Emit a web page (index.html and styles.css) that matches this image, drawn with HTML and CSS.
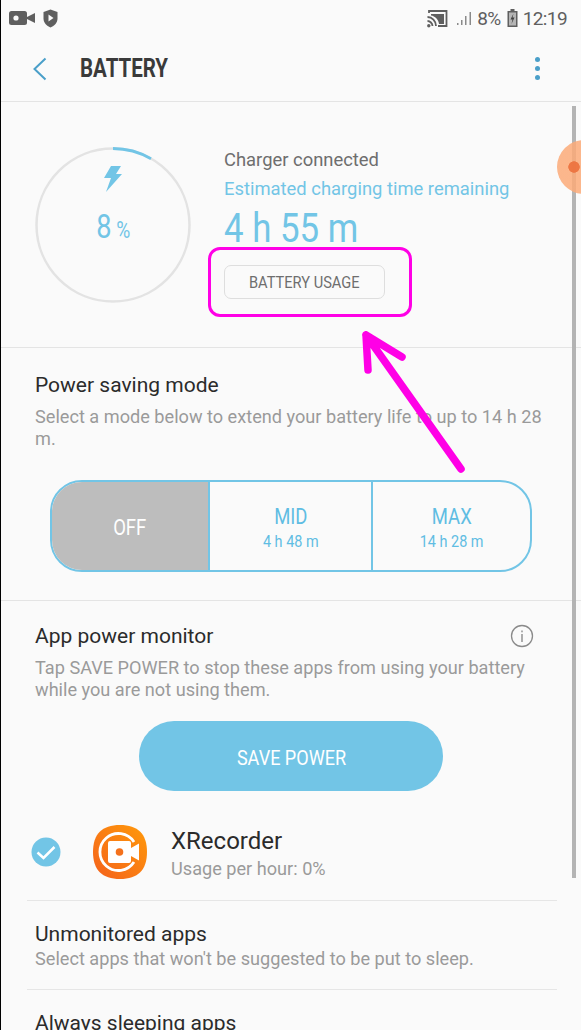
FILE: index.html
```html
<!DOCTYPE html>
<html lang="en">
  <head>
    <meta charset="UTF-8" />
    <meta name="viewport" content="width=device-width, initial-scale=1.0" />
    <title>Battery</title>
    <link rel="stylesheet" href="styles.css">
  </head>
  <body>
    <div class="phone">
      <div class="status-bar">
        <div class="status-left">
          <svg width="27" height="16" viewBox="0 0 27 16"><rect x="0" y="1" width="18" height="14" rx="2.5" fill="#5f5f5f"/><path d="M18 7l8-4v10l-8-4z" fill="#5f5f5f"/><circle cx="7" cy="8" r="2.6" fill="#fafafa"/></svg>
          <svg width="15" height="19" viewBox="0 0 15 19"><path d="M7.5 0.5L14.5 3v6.5c0 4.2-3 7.5-7 9-4-1.500-7-4.800-7-9V3z" fill="#5f5f5f"/><path d="M5.500 5.500l5 3.500-5 3.500z" fill="#fafafa"/></svg>
        </div>
        <div class="status-right">
          <svg class="cast" width="21" height="19" viewBox="0 0 21 19"><path d="M2 4V2h17.500v15H11" fill="none" stroke="#5f5f5f" stroke-width="1.800"/><path d="M0.500 8c4.500 0 8.500 4 8.500 9M0.500 12c2.500 0 5 2.300 5 5" fill="none" stroke="#5f5f5f" stroke-width="1.800"/><circle cx="1.800" cy="16.800" r="1.700" fill="#5f5f5f"/><path d="M4 5h13v10h-5c-.5-4.500-4-8-8-8.500z" fill="#5f5f5f"/></svg>
          <svg class="signal" width="15" height="15" viewBox="0 0 15 15"><rect x="0" y="12" width="1.500" height="2" fill="#8a8a8a"/><rect x="4" y="9" width="1.500" height="5" fill="#8a8a8a"/><rect x="8" y="5" width="1.500" height="9" fill="#8a8a8a"/><rect x="12.500" y="1" width="1.500" height="13" fill="#8a8a8a"/></svg>
          <span class="status-text pct">8%</span>
          <svg class="batt" width="11" height="18" viewBox="0 0 11 18"><path d="M3.500 0h4v2h3v16H.5V2h3z" fill="#5f5f5f"/><rect x="2" y="3.500" width="7" height="13" fill="#b5b5b5"/><path d="M6.500 4.500L3.500 10.500h2l-1 4.500 3-6.500h-2z" fill="#404040"/></svg>
          <span class="status-text">12:19</span>
        </div>
      </div>

      <div class="app-bar">
        <svg class="back" width="16" height="24" viewBox="0 0 16 24"><path d="M13.500 1.500L2.500 12l11 10.500" fill="none" stroke="#4a9fc9" stroke-width="2"/></svg>
        <h1 class="title">BATTERY</h1>
        <div class="more"><i></i><i></i><i></i></div>
      </div>

      <section class="summary">
        <div class="ring">
          <svg class="ring-art" width="158" height="158" viewBox="0 0 158 158">
            <circle cx="79" cy="79" r="76.500" fill="none" stroke="#e3e3e3" stroke-width="2.500"/>
            <path d="M79 2.500A76.500 76.500 0 0 1 117 12.700" fill="none" stroke="#72c5e6" stroke-width="2.800"/>
          </svg>
          <svg class="bolt" width="18" height="26" viewBox="0 0 18 26"><path d="M7 0h10l-5 8h6L2 26l5-14H0z" fill="#72c5e6"/></svg>
          <div class="ring-value">8<span class="ring-unit">%</span></div>
        </div>
        <div class="charge">
          <p class="charge-state">Charger connected</p>
          <p class="charge-label">Estimated charging time remaining</p>
          <p class="charge-time">4 h 55 m</p>
          <button class="usage-btn"><span>BATTERY USAGE</span></button>
        </div>
      </section>

      <section class="saving">
        <h2 class="row-title">Power saving mode</h2>
        <p class="row-desc">Select a mode below to extend your battery life to up to 14 h 28 m.</p>
        <div class="modes">
          <div class="mode mode-off"><strong>OFF</strong></div>
          <div class="mode mode-mid"><strong>MID</strong><span>4 h 48 m</span></div>
          <div class="mode mode-max"><strong>MAX</strong><span>14 h 28 m</span></div>
        </div>
      </section>

      <section class="monitor">
        <div class="monitor-head">
          <h2 class="row-title">App power monitor</h2>
          <svg width="24" height="24" viewBox="0 0 24 24"><circle cx="12" cy="12" r="10.500" fill="none" stroke="#8a8a8a" stroke-width="1.300"/><rect x="11.300" y="10" width="1.400" height="8" fill="#8a8a8a"/><rect x="11.300" y="6.500" width="1.400" height="1.800" fill="#8a8a8a"/></svg>
        </div>
        <p class="row-desc">Tap SAVE POWER to stop these apps from using your battery while you are not using them.</p>
        <button class="save-btn"><span>SAVE POWER</span></button>
        <div class="app-row">
          <svg class="check" width="30" height="30" viewBox="0 0 30 30"><circle cx="15" cy="15" r="14.500" fill="#72c5e6"/><path d="M6.500 15.500l6 5.500 11-11" fill="none" stroke="#fff" stroke-width="2.500"/></svg>
          <svg class="app-icon" width="54" height="54" viewBox="0 0 54 54">
            <defs><linearGradient id="xr" x1="1" y1="0" x2="0" y2="1"><stop offset="0" stop-color="#ff9a0a"/><stop offset="1" stop-color="#f4611c"/></linearGradient></defs>
            <path d="M27 0C45 0 54 9 54 27S45 54 27 54 0 45 0 27 9 0 27 0z" fill="url(#xr)"/>
            <path d="M41 17A18.500 18.500 0 1 0 41 37" fill="none" stroke="#fff" stroke-width="2.800"/>
            <path d="M17 16h19a2 2 0 0 1 2 2v5l8-4.500v17L38 31v5a2 2 0 0 1-2 2H17a2 2 0 0 1-2-2V18a2 2 0 0 1 2-2z" fill="#fff"/>
            <circle cx="26.500" cy="27" r="3.800" fill="#f4711c"/>
          </svg>
          <div class="app-text">
            <div class="app-name">XRecorder</div>
            <div class="app-usage">Usage per hour: 0%</div>
          </div>
        </div>
      </section>

      <div class="list-item">
        <h2 class="row-title">Unmonitored apps</h2>
        <p class="row-desc">Select apps that won't be suggested to be put to sleep.</p>
      </div>
      <div class="list-item">
        <h2 class="row-title">Always sleeping apps</h2>
      </div>

      <div class="scrollbar"></div>
      <div class="touch-dot"></div>
      <div class="callout"></div>
      <svg class="arrow" width="120" height="150" viewBox="0 0 120 150">
        <path d="M100 139L5 5M5 5L7 40M5 5L41 27" fill="none" stroke="#ff00e6" stroke-width="7.500" stroke-linecap="round" stroke-linejoin="round"/>
      </svg>
    </div>
  </body>
</html>
```

FILE: styles.css
```css
/* styles.css */
* {
  box-sizing: border-box;
}

html,
body {
  margin: 0;
  height: 100%;
}

body {
  font-family: Roboto, "Noto Sans", sans-serif;
  background-color: #000;
}

.phone {
  position: relative;
  width: 580px;
  height: 1030px;
  margin-left: 1px;
  overflow: hidden;
  background-color: #fafafa;
}

h1,
h2,
p {
  margin: 0;
  font-weight: normal;
}

button {
  font-family: inherit;
  cursor: pointer;
}

/* status bar */
.status-bar {
  display: flex;
  justify-content: space-between;
  align-items: center;
  height: 36px;
  padding: 0 14px 0 8px;
}

.status-left {
  display: flex;
  align-items: center;
  gap: 7px;
}

.status-right {
  display: flex;
  align-items: center;
  color: #5f5f5f;
}

.status-text {
  font-size: 19px;
  letter-spacing: -0.6px;
}

.cast {
  margin-right: 9px;
}

.signal {
  margin-right: 5px;
}

.batt {
  margin: 0 5px 0 6px;
}

/* app bar */
.app-bar {
  display: flex;
  align-items: center;
  height: 66px;
  padding: 0 0 0 31px;
  border-bottom: 1px solid #e4e4e4;
}

.title {
  margin-left: 32px;
  font-size: 25px;
  font-weight: 700;
  color: #3a3a3a;
  transform: scaleX(0.82);
  transform-origin: left center;
}

.more {
  display: flex;
  flex-direction: column;
  gap: 4px;
  margin-left: auto;
  margin-right: 41px;
}

.more i {
  display: block;
  width: 5px;
  height: 5px;
  border-radius: 50%;
  background-color: #4a9fc9;
}

/* summary */
.summary {
  display: flex;
  height: 246px;
  padding: 44px 0 0 33px;
  border-bottom: 1px solid #e4e4e4;
}

.ring {
  position: relative;
  display: flex;
  flex-direction: column;
  align-items: center;
  width: 158px;
  height: 158px;
  flex-shrink: 0;
  padding-top: 20px;
}

.ring-art {
  position: absolute;
  top: 0;
  left: 0;
}

.ring-value {
  margin-top: 16px;
  font-size: 34px;
  line-height: 36px;
  color: #72c5e6;
  transform: scaleX(0.8);
}

.ring-unit {
  margin-left: 6px;
  font-size: 24px;
}

.charge {
  margin-left: 32px;
  margin-top: 1px;
}

.charge-state {
  font-size: 18.400px;
  line-height: 26px;
  color: #6e6e6e;
}

.charge-label {
  margin-top: 3px;
  font-size: 18.400px;
  line-height: 26px;
  color: #72c5e6;
}

.charge-time {
  margin-top: 5px;
  font-size: 40px;
  line-height: 44px;
  color: #72c5e6;
  white-space: nowrap;
  transform: scaleX(0.87);
  transform-origin: left center;
}

.usage-btn {
  display: block;
  width: 161px;
  height: 34px;
  margin-top: 14px;
  padding: 0;
  font-size: 17px;
  color: #6e6e6e;
  background-color: #fafafa;
  border: 1.500px solid #dedede;
  border-radius: 7px;
}

.usage-btn span,
.save-btn span {
  display: inline-block;
  white-space: nowrap;
  transform: scaleX(0.86);
}

/* rows */
.row-title {
  font-size: 21px;
  line-height: 26px;
  color: #2b2b2b;
}

.row-desc {
  font-size: 18.150px;
  line-height: 22px;
  color: #9a9a9a;
}

.saving {
  height: 253px;
  padding: 24px 0 0 34px;
  border-bottom: 1px solid #e4e4e4;
}

.saving .row-desc {
  width: 515px;
  margin-top: 8px;
}

.modes {
  display: flex;
  width: 482px;
  height: 92px;
  margin: 30px 0 0 15px;
  overflow: hidden;
  border: 2px solid #72c5e6;
  border-radius: 32px;
}

.mode {
  display: flex;
  flex-direction: column;
  align-items: center;
  justify-content: center;
  padding-top: 4px;
  color: #72c5e6;
}

.mode strong {
  font-size: 22px;
  font-weight: normal;
  line-height: 24px;
  transform: scaleX(0.84);
}

.mode span {
  margin-top: 2px;
  font-size: 17px;
  line-height: 20px;
  transform: scaleX(0.85);
  white-space: nowrap;
}

.mode-off {
  width: 156px;
  color: #fff;
  background-color: #bdbdbd;
}

.mode-mid {
  width: 165px;
  color: #5fbde3;
  border-left: 2px solid #72c5e6;
  border-right: 2px solid #72c5e6;
}

.mode-max {
  flex: 1;
  color: #5fbde3;
}

/* monitor */
.monitor {
  padding: 22px 0 0 34px;
}

.monitor-head {
  display: flex;
  justify-content: space-between;
  align-items: center;
  padding-right: 47px;
}

.monitor .row-desc {
  width: 520px;
  margin-top: 8px;
}

.save-btn {
  display: block;
  width: 304px;
  height: 70px;
  margin: 20px 0 0 104px;
  padding-top: 4px;
  font-size: 21px;
  color: #fff;
  background-color: #72c5e6;
  border: none;
  border-radius: 35px;
}

.app-row {
  display: flex;
  align-items: center;
  height: 56px;
  margin-top: 33px;
}

.check {
  margin-left: -4px;
}

.app-icon {
  margin-left: 32px;
}

.app-text {
  margin-left: 24px;
  padding-top: 1px;
}

.app-name {
  font-size: 24px;
  line-height: 30px;
  color: #2b2b2b;
}

.app-usage {
  margin-top: 2px;
  font-size: 18.150px;
  line-height: 22px;
  color: #9a9a9a;
}

.list-item {
  height: 89px;
  margin: 20px 24px 0 26px;
  padding: 20px 0 0 8px;
  border-top: 1px solid #e6e6e6;
}

.list-item + .list-item {
  margin-top: 0;
}

.list-item .row-desc {
  margin-top: 1px;
}

/* overlays */
.scrollbar {
  position: absolute;
  top: 106px;
  left: 571px;
  width: 4px;
  height: 772px;
  background-color: #b4b4b4;
}

.touch-dot {
  position: absolute;
  top: 140px;
  left: 556px;
  width: 54px;
  height: 54px;
  border-radius: 50%;
  background:
    radial-gradient(circle 6px at 17px 27px, rgba(236, 112, 60, 0.9) 90%, transparent),
    radial-gradient(circle, rgba(251, 170, 120, 0.85) 85%, rgba(253, 215, 190, 0.7) 88%);
}

.callout {
  position: absolute;
  top: 247px;
  left: 207px;
  width: 204px;
  height: 70px;
  border: 3px solid #ff00e6;
  border-radius: 12px;
}

.arrow {
  position: absolute;
  top: 330px;
  left: 360px;
}
```
